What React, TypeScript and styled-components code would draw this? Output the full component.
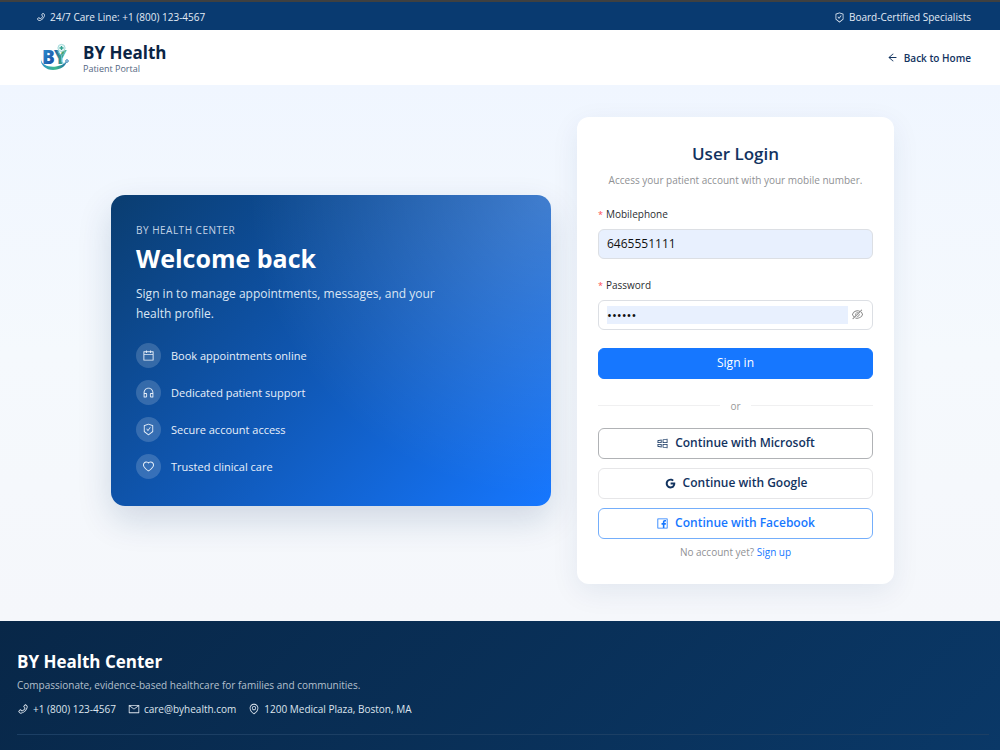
import React, { useState } from "react";
import styled, { createGlobalStyle, css } from "styled-components";
import {
  AiOutlineArrowLeft,
  AiOutlineCalendar,
  AiOutlineCustomerService,
  AiOutlineEnvironment,
  AiOutlineEye,
  AiOutlineEyeInvisible,
  AiOutlineFacebook,
  AiOutlineGoogle,
  AiOutlineHeart,
  AiOutlineMail,
  AiOutlinePhone,
  AiOutlineSafetyCertificate,
  AiOutlineWindows,
} from "react-icons/ai";

const GlobalStyle = createGlobalStyle`
  *, *::before, *::after { box-sizing: border-box; }
  body {
    margin: 0;
    font-family: "Segoe UI", "Open Sans", "Noto Sans", sans-serif;
    font-size: 11px;
    line-height: 16px;
    color: #0b2545;
    background: #f5f7fb;
  }
  h1, h2, p, ul { margin: 0; padding: 0; }
  svg { display: block; flex: none; }
`;

const Page = styled.div`
  min-height: 100vh;
  display: flex;
  flex-direction: column;
`;

const TopBar = styled.div`
  display: flex;
  align-items: center;
  justify-content: space-between;
  height: 30px;
  padding: 2px 29px 0 36px;
  border-top: 2px solid #3f4040;
  background: #093a70;
  color: #e3ebf5;
  font-size: 10px;
`;

const IconText = styled.span`
  display: inline-flex;
  align-items: center;
  gap: 4px;
`;

const Header = styled.header`
  display: flex;
  align-items: center;
  justify-content: space-between;
  height: 55px;
  padding: 0 29px 0 40px;
  background: #fff;
`;

const Brand = styled.div`
  display: flex;
  align-items: center;
  gap: 12px;
`;

const BrandName = styled.div`
  margin-top: 2px;
  font-size: 17px;
  line-height: 20px;
  font-weight: 700;
  color: #0b2545;
`;

const BrandTag = styled.div`
  font-size: 9px;
  line-height: 12px;
  color: #52667f;
`;

const BackLink = styled.a`
  display: inline-flex;
  align-items: center;
  gap: 6px;
  font-size: 10px;
  font-weight: 600;
  color: #12335f;
  text-decoration: none;
`;

const Main = styled.main`
  flex: 1;
  display: flex;
  align-items: center;
  justify-content: center;
  padding: 31px 14px 37px 19px;
  background: linear-gradient(180deg, #f0f6ff 0%, #f5f9fd 50%, #f5f7fb 100%);
`;

const Columns = styled.div`
  display: grid;
  grid-template-columns: minmax(0, 440fr) minmax(0, 317fr);
  gap: 26px;
  align-items: center;
  width: 100%;
  max-width: 783px;

  @media (max-width: 680px) {
    grid-template-columns: minmax(0, 1fr);
  }
`;

const Hero = styled.section`
  padding: 27px 25px 26px;
  border-radius: 14px;
  color: #fff;
  background:
    radial-gradient(circle at 100% 0%, rgba(255, 255, 255, 0.2) 0%, rgba(255, 255, 255, 0) 56%),
    linear-gradient(135deg, #0a3d70 0%, #1059b8 52%, #1677ff 100%);
  box-shadow: 0 14px 34px rgba(10, 50, 100, 0.16);
`;

const Eyebrow = styled.p`
  font-size: 10px;
  letter-spacing: 0.05em;
  text-transform: uppercase;
  color: #c3d3e6;
`;

const HeroTitle = styled.h1`
  margin-top: 3px;
  font-size: 25px;
  line-height: 34px;
  font-weight: 700;
`;

const HeroText = styled.p`
  max-width: 300px;
  margin-top: 9px;
  font-size: 12px;
  line-height: 20px;
  color: #dbe6f4;
`;

const Features = styled.ul`
  display: grid;
  gap: 11px;
  margin-top: 19px;
  list-style: none;
`;

const Feature = styled.li`
  display: flex;
  align-items: center;
  gap: 10px;
  height: 26px;
  color: #e8f0fa;
`;

const FeatureIcon = styled.span`
  display: grid;
  place-items: center;
  width: 25px;
  height: 25px;
  border-radius: 50%;
  background: rgba(255, 255, 255, 0.17);
`;

const Card = styled.section`
  padding: 25px 21px 24px;
  border-radius: 12px;
  background: #fff;
  box-shadow: 0 8px 28px rgba(10, 50, 100, 0.08);
`;

const CardTitle = styled.h2`
  font-size: 17px;
  line-height: 24px;
  font-weight: 600;
  text-align: center;
  color: #12335f;
`;

const CardText = styled.p`
  margin-top: 6px;
  font-size: 10px;
  text-align: center;
  color: #8f9194;
`;

const Form = styled.form`
  display: grid;
  gap: 18px;
  margin-top: 18px;
`;

const Field = styled.div`
  display: grid;
  gap: 7px;
`;

const Label = styled.label`
  font-size: 10px;
  color: #2b2d30;

  &::before {
    content: "*";
    margin-right: 3px;
    font-size: 9px;
    line-height: 1;
    color: #ff4d4f;
  }
`;

const fieldBox = css`
  width: 100%;
  height: 30px;
  padding: 0 8px;
  border: 1px solid #dcdfe4;
  border-radius: 6px;
`;

const TextInput = styled.input`
  ${fieldBox}
  font: inherit;
  font-size: 12px;
  color: #111;
  background: #e8f0fe;
`;

const PasswordBox = styled.div`
  ${fieldBox}
  display: flex;
  align-items: center;
  gap: 3px;
  background: #fff;
`;

const PasswordInput = styled.input`
  flex: 1;
  min-width: 0;
  height: 18px;
  padding: 0;
  border: 0;
  font: inherit;
  font-size: 13px;
  color: #111;
  background: #e8f0fe;
`;

const EyeButton = styled.button`
  padding: 0;
  border: 0;
  color: #8a8a8a;
  background: none;
`;

const Button = styled.button<{ $tone: "primary" | "dark" | "plain" | "blue" }>`
  display: flex;
  align-items: center;
  justify-content: center;
  gap: 6px;
  width: 100%;
  height: 31px;
  padding: 0;
  border: 1px solid;
  border-radius: 6px;
  font: inherit;
  font-size: 12px;
  font-weight: 600;
  background: #fff;
  ${({ $tone }) =>
    ({
      primary: "color: #fff; background: #1677ff; border-color: #1677ff; font-weight: 400;",
      dark: "color: #12335f; border-color: #b0b2b5;",
      plain: "color: #12335f; border-color: #e6e6e8;",
      blue: "color: #1677ff; border-color: #74aefb;",
    })[$tone]}
`;

const Divider = styled.div`
  display: flex;
  align-items: center;
  gap: 10px;
  margin: 19px 0 14px;
  font-size: 10px;
  color: #999;

  &::before,
  &::after {
    content: "";
    flex: 1;
    height: 1px;
    background: #f0f0f1;
  }
`;

const Providers = styled.div`
  display: grid;
  gap: 9px;
`;

const SignUp = styled.p`
  margin-top: 5px;
  font-size: 10px;
  text-align: center;
  color: #8f9194;

  a {
    color: #1677ff;
    text-decoration: none;
  }
`;

const Footer = styled.footer`
  padding: 30px 11px 15px 17px;
  color: #dde5ee;
  background: linear-gradient(135deg, #082748 0%, #0a3867 100%);
`;

const FooterTitle = styled.h2`
  font-size: 17px;
  line-height: 22px;
  font-weight: 700;
  color: #fff;
`;

const FooterText = styled.p`
  margin-top: 4px;
  font-size: 10px;
  color: #b4c0ce;
`;

const Contacts = styled.div`
  display: flex;
  flex-wrap: wrap;
  gap: 12px;
  margin-top: 8px;
  padding-bottom: 17px;
  border-bottom: 1px solid #1c3f64;
  font-size: 10px;
`;

function Logo() {
  return (
    <svg width="31" height="30" viewBox="0 0 31 30" role="img" aria-label="BY Health">
      <defs>
        <linearGradient id="letterB" x1="0" y1="0" x2="1" y2="1">
          <stop offset="0" stopColor="#2f9bd8" />
          <stop offset="1" stopColor="#173f98" />
        </linearGradient>
        <linearGradient id="letterY" x1="0" y1="0" x2="1" y2="0">
          <stop offset="0" stopColor="#1d5cae" />
          <stop offset="0.5" stopColor="#2f9a8c" />
          <stop offset="1" stopColor="#6cc24a" />
        </linearGradient>
        <linearGradient id="swoosh" x1="0" y1="0" x2="1" y2="0">
          <stop offset="0" stopColor="#2a8fd0" />
          <stop offset="0.55" stopColor="#3cb98b" />
          <stop offset="1" stopColor="#1c67a8" />
        </linearGradient>
      </defs>
      <path d="M1 16c0 6 8 8.500 15 7.500c6-1 9-3 11-6-1 6-7 9.500-14 9.500C6 27 0 22 1 16z" fill="url(#swoosh)" />
      <text x="2" y="21" fontFamily="Open Sans, sans-serif" fontWeight="800" fontSize="19" fill="url(#letterB)">
        B
      </text>
      <text x="14" y="21" fontFamily="Open Sans, sans-serif" fontWeight="800" fontSize="19" fill="url(#letterY)">
        Y
      </text>
      <path d="M18 7c0 3 1.500 5 3.500 5s3.500-2 3.500-5M21.500 12v6c0 3 4 3 5 .5" fill="none" stroke="#6fb6cc" strokeWidth="1" />
      <circle cx="21.500" cy="5" r="3.600" fill="#e9f8f6" stroke="#8ccfd2" strokeWidth="0.8" />
      <path d="M21.500 3v4M19.500 5h4" stroke="#2fa08f" strokeWidth="1.300" />
      <circle cx="27" cy="18" r="1.300" fill="#dff1f6" stroke="#2a78b0" strokeWidth="0.9" />
    </svg>
  );
}

const features = [
  { icon: AiOutlineCalendar, text: "Book appointments online" },
  { icon: AiOutlineCustomerService, text: "Dedicated patient support" },
  { icon: AiOutlineSafetyCertificate, text: "Secure account access" },
  { icon: AiOutlineHeart, text: "Trusted clinical care" },
];

export default function App() {
  const [visible, setVisible] = useState(false);

  return (
    <Page>
      <GlobalStyle />
      <TopBar>
        <IconText>
          <AiOutlinePhone size={10} />
          24/7 Care Line: +1 (800) 123-4567
        </IconText>
        <IconText>
          <AiOutlineSafetyCertificate size={11} />
          Board-Certified Specialists
        </IconText>
      </TopBar>
      <Header>
        <Brand>
          <Logo />
          <div>
            <BrandName>BY Health</BrandName>
            <BrandTag>Patient Portal</BrandTag>
          </div>
        </Brand>
        <BackLink href="#home">
          <AiOutlineArrowLeft size={11} />
          Back to Home
        </BackLink>
      </Header>
      <Main>
        <Columns>
          <Hero>
            <Eyebrow>BY Health Center</Eyebrow>
            <HeroTitle>Welcome back</HeroTitle>
            <HeroText>Sign in to manage appointments, messages, and your health profile.</HeroText>
            <Features>
              {features.map(({ icon: Icon, text }) => (
                <Feature key={text}>
                  <FeatureIcon>
                    <Icon size={13} />
                  </FeatureIcon>
                  {text}
                </Feature>
              ))}
            </Features>
          </Hero>
          <Card>
            <CardTitle>User Login</CardTitle>
            <CardText>Access your patient account with your mobile number.</CardText>
            <Form onSubmit={(e) => e.preventDefault()}>
              <Field>
                <Label htmlFor="mobile">Mobilephone</Label>
                <TextInput id="mobile" type="tel" defaultValue="6465551111" />
              </Field>
              <Field>
                <Label htmlFor="password">Password</Label>
                <PasswordBox>
                  <PasswordInput id="password" type={visible ? "text" : "password"} defaultValue="secret" />
                  <EyeButton type="button" aria-label="Toggle password visibility" onClick={() => setVisible(!visible)}>
                    {visible ? <AiOutlineEye size={13} /> : <AiOutlineEyeInvisible size={13} />}
                  </EyeButton>
                </PasswordBox>
              </Field>
              <Button type="submit" $tone="primary">
                Sign in
              </Button>
            </Form>
            <Divider>or</Divider>
            <Providers>
              <Button type="button" $tone="dark">
                <AiOutlineWindows size={13} />
                Continue with Microsoft
              </Button>
              <Button type="button" $tone="plain">
                <AiOutlineGoogle size={13} />
                Continue with Google
              </Button>
              <Button type="button" $tone="blue">
                <AiOutlineFacebook size={13} />
                Continue with Facebook
              </Button>
            </Providers>
            <SignUp>
              No account yet? <a href="#signup">Sign up</a>
            </SignUp>
          </Card>
        </Columns>
      </Main>
      <Footer>
        <FooterTitle>BY Health Center</FooterTitle>
        <FooterText>Compassionate, evidence-based healthcare for families and communities.</FooterText>
        <Contacts>
          <IconText>
            <AiOutlinePhone size={12} />
            +1 (800) 123-4567
          </IconText>
          <IconText>
            <AiOutlineMail size={12} />
            care@byhealth.com
          </IconText>
          <IconText>
            <AiOutlineEnvironment size={12} />
            1200 Medical Plaza, Boston, MA
          </IconText>
        </Contacts>
      </Footer>
    </Page>
  );
}
